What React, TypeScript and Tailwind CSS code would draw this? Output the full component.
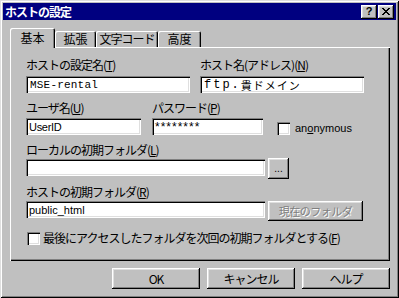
import React from "react";

function Acc({ pre, k, post = "" }: { pre: string; k: string; post?: string }) {
  return (
    <span>
      {pre}(<span className="underline">{k}</span>){post}
    </span>
  );
}

export default function App() {
  return (
    <div className="w-[399px] h-[298px] bg-[#c0c0c0] p-[3px] flex flex-col shadow-[inset_1px_1px_#dfdfdf,inset_-1px_-1px_#000,inset_2px_2px_#fff,inset_-2px_-2px_#808080] font-['Noto_Sans_CJK_JP',sans-serif] text-black">
      {/* Title bar */}
      <div className="h-[17px] bg-[#000080] flex items-start pl-[2px] pr-[2px]">
        <span className="text-white font-bold text-[12px] tracking-[-1px] leading-[17px]">ホストの設定</span>
        <div className="ml-auto mt-[2px] flex gap-[1px]">
          <div className="w-[16px] h-[14px] bg-[#c0c0c0] flex items-center justify-center shadow-[inset_-1px_-1px_#000,inset_1px_1px_#fff,inset_-2px_-2px_#808080,inset_2px_2px_#dfdfdf]">
            <span className="font-['Liberation_Sans',sans-serif] font-bold text-[11px] leading-[11px] -mt-[1px]">?</span>
          </div>
          <div className="w-[16px] h-[14px] bg-[#c0c0c0] flex items-center justify-center shadow-[inset_-1px_-1px_#000,inset_1px_1px_#fff,inset_-2px_-2px_#808080,inset_2px_2px_#dfdfdf]">
            <svg width="8" height="7" viewBox="0 0 8 7" shapeRendering="crispEdges" className="-mt-[1px]">
              <path d="M0 0h2v1H0zM6 0h2v1H6zM1 1h2v1H1zM5 1h2v1H5zM2 2h4v1H2zM3 3h2v1H3zM2 4h4v1H2zM1 5h2v1H1zM5 5h2v1H5zM0 6h2v1H0zM6 6h2v1H6z" fill="#000" />
            </svg>
          </div>
        </div>
      </div>

      {/* Tabs */}
      <div className="mt-[8px] ml-[7px] h-[19px] flex items-end relative z-10">
        <div className="w-[45px] h-[20px] -mb-[1px] bg-[#c0c0c0] rounded-t-[2px] flex items-center justify-center text-[12px] leading-[16px] shadow-[inset_1px_1px_#fff,inset_-1px_0_#000,inset_-2px_0_#808080]">
          基本
        </div>
        <div className="w-[41px] h-[16px] bg-[#c0c0c0] rounded-t-[2px] flex items-center justify-center text-[12px] leading-[16px] shadow-[inset_1px_1px_#fff,inset_-1px_0_#000,inset_-2px_0_#808080]">
          拡張
        </div>
        <div className="w-[62px] h-[16px] bg-[#c0c0c0] rounded-t-[2px] flex items-center justify-center text-[12px] tracking-[-1px] leading-[16px] shadow-[inset_1px_1px_#fff,inset_-1px_0_#000,inset_-2px_0_#808080]">
          文字コード
        </div>
        <div className="w-[43px] h-[16px] bg-[#c0c0c0] rounded-t-[2px] flex items-center justify-center text-[12px] leading-[16px] shadow-[inset_1px_1px_#fff,inset_-1px_0_#000,inset_-2px_0_#808080]">
          高度
        </div>
      </div>

      {/* Panel */}
      <div className="ml-[7px] w-[380px] h-[214px] pt-[10px] pl-[16px] flex flex-col text-[12px] tracking-[-1px] leading-[16px] shadow-[inset_1px_1px_#fff,inset_-1px_-1px_#000,inset_-2px_-2px_#808080]">
        {/* Row 1 */}
        <div className="flex gap-[10px]">
          <div className="w-[164px] flex flex-col">
            <div className="h-[16px]"><Acc pre="ホストの設定名" k="T" /></div>
            <div className="mt-[3px] h-[17px] pl-[4px] flex items-center bg-white shadow-[inset_1px_1px_#808080,inset_2px_2px_#000,inset_-1px_-1px_#fff,inset_-2px_-2px_#dfdfdf] font-['Liberation_Mono',monospace] text-[11px] tracking-[0.2px]">
              MSE-rental
            </div>
          </div>
          <div className="w-[164px] flex flex-col">
            <div className="h-[16px]"><Acc pre="ホスト名(アドレス)" k="N" /></div>
            <div className="mt-[3px] h-[17px] pl-[4px] flex items-center bg-white shadow-[inset_1px_1px_#808080,inset_2px_2px_#000,inset_-1px_-1px_#fff,inset_-2px_-2px_#dfdfdf]">
              <span className="font-['Liberation_Mono',monospace] text-[12px] tracking-[2px]">ftp.</span>
              <span className="font-['Noto_Sans_CJK_JP',sans-serif] text-[11px] tracking-[1px]">貴ドメイン</span>
            </div>
          </div>
        </div>

        {/* Row 2 */}
        <div className="mt-[7px] flex">
          <div className="w-[115px] flex flex-col">
            <div className="h-[16px]"><Acc pre="ユーザ名" k="U" /></div>
            <div className="mt-[2px] h-[17px] pl-[3px] flex items-center bg-white shadow-[inset_1px_1px_#808080,inset_2px_2px_#000,inset_-1px_-1px_#fff,inset_-2px_-2px_#dfdfdf] font-['Liberation_Sans',sans-serif] text-[11px] tracking-[-0.3px]">
              UserID
            </div>
          </div>
          <div className="ml-[11px] w-[111px] flex flex-col">
            <div className="h-[16px]"><Acc pre="パスワード" k="P" /></div>
            <div className="mt-[2px] h-[17px] pl-[3px] flex items-center bg-white shadow-[inset_1px_1px_#808080,inset_2px_2px_#000,inset_-1px_-1px_#fff,inset_-2px_-2px_#dfdfdf] font-['Liberation_Sans',sans-serif] text-[12px] tracking-[1px]">
              ********
            </div>
          </div>
          <div className="ml-[14px] pt-[22px] flex items-start">
            <div className="w-[13px] h-[13px] bg-white shadow-[inset_1px_1px_#808080,inset_2px_2px_#000,inset_-1px_-1px_#fff,inset_-2px_-2px_#dfdfdf]" />
            <span className="ml-[5px] -mt-[1px] font-['Liberation_Sans',sans-serif] text-[11px] tracking-[0px] leading-[14px]">
              an<span className="underline">o</span>nymous
            </span>
          </div>
        </div>

        {/* Row 3 */}
        <div className="mt-[7px] h-[16px]"><Acc pre="ローカルの初期フォルダ" k="L" /></div>
        <div className="flex items-start">
          <div className="mt-[1px] w-[239px] h-[17px] bg-white shadow-[inset_1px_1px_#808080,inset_2px_2px_#000,inset_-1px_-1px_#fff,inset_-2px_-2px_#dfdfdf]" />
          <div className="ml-[3px] w-[21px] h-[21px] bg-[#c0c0c0] flex items-center justify-center font-['Liberation_Sans',sans-serif] text-[10px] tracking-[0px] shadow-[inset_-1px_-1px_#000,inset_1px_1px_#fff,inset_-2px_-2px_#808080,inset_2px_2px_#dfdfdf]">
            ...
          </div>
        </div>

        {/* Row 4 */}
        <div className="mt-[5px] h-[16px]"><Acc pre="ホストの初期フォルダ" k="R" /></div>
        <div className="mt-[1px] flex items-start">
          <div className="w-[239px] h-[17px] pl-[3px] flex items-center bg-white shadow-[inset_1px_1px_#808080,inset_2px_2px_#000,inset_-1px_-1px_#fff,inset_-2px_-2px_#dfdfdf] font-['Liberation_Sans',sans-serif] text-[11px] tracking-[0px]">
            public_html
          </div>
          <div className="ml-[3px] w-[95px] h-[20px] bg-[#c0c0c0] flex items-center justify-center text-[11px] tracking-[-0.5px] text-[#808080] [text-shadow:1px_1px_0_#fff] shadow-[inset_-1px_-1px_#000,inset_1px_1px_#fff,inset_-2px_-2px_#808080,inset_2px_2px_#dfdfdf]">
            現在のフォルダ
          </div>
        </div>

        {/* Row 5 */}
        <div className="mt-[10px] flex items-center h-[14px]">
          <div className="ml-[1px] w-[13px] h-[13px] bg-white shadow-[inset_1px_1px_#808080,inset_2px_2px_#000,inset_-1px_-1px_#fff,inset_-2px_-2px_#dfdfdf]" />
          <span className="ml-[3px]"><Acc pre="最後にアクセスしたフォルダを次回の初期フォルダとする" k="F" /></span>
        </div>
      </div>

      {/* Buttons */}
      <div className="mt-[7px] flex justify-end gap-[7px] pr-[6px]">
        {["OK", "キャンセル", "ヘルプ"].map((t) => (
          <div
            key={t}
            className="w-[88px] h-[21px] bg-[#c0c0c0] flex items-center justify-center text-[12px] tracking-[-1px] leading-[16px] shadow-[inset_-1px_-1px_#000,inset_1px_1px_#fff,inset_-2px_-2px_#808080,inset_2px_2px_#dfdfdf]"
          >
            {t}
          </div>
        ))}
      </div>
    </div>
  );
}
